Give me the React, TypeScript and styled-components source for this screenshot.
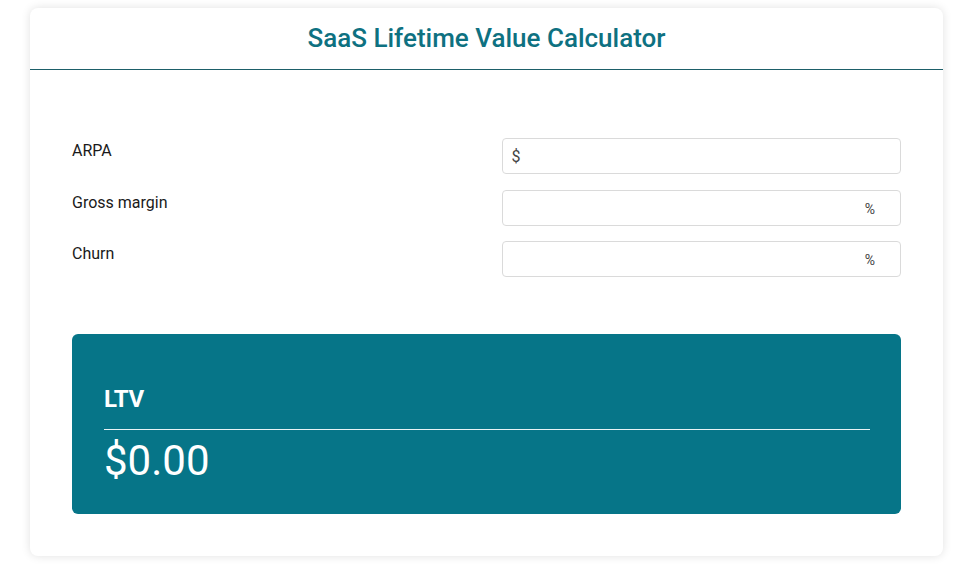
import React from "react";
import styled, { createGlobalStyle } from "styled-components";

const Global = createGlobalStyle`
  * { box-sizing: border-box; }
  body { margin: 0; background: #fff; font-family: Roboto, "Liberation Sans", sans-serif; }
`;

const Page = styled.div`
  padding: 8px 32px 14px 30px;
`;

const Card = styled.div`
  background: #fff;
  border-radius: 8px;
  box-shadow: 0 0 10px rgba(0, 0, 0, 0.12);
  overflow: hidden;
`;

const Header = styled.div`
  height: 62px;
  border-bottom: 1px solid #1d5f69;
  display: flex;
  align-items: center;
  justify-content: center;
  padding-bottom: 1px;
`;

const Title = styled.h1`
  margin: 0;
  font-size: 26px;
  font-weight: 500;
  color: #0e7181;
  letter-spacing: 0;
`;

const Body = styled.div`
  padding: 68px 42px 42px;
`;

const Form = styled.div`
  display: flex;
  flex-direction: column;
  gap: 15.5px;
`;

const Row = styled.div`
  display: grid;
  grid-template-columns: 1fr 1fr;
  column-gap: 30px;
`;

const Label = styled.label`
  font-size: 16px;
  color: #1a1a1a;
  padding-top: 3px;
`;

const InputBox = styled.div<{ $suffix?: boolean }>`
  height: 36px;
  border: 1px solid #dadada;
  border-radius: 4px;
  display: flex;
  align-items: center;
  justify-content: ${(p) => (p.$suffix ? "flex-end" : "flex-start")};
  padding: ${(p) => (p.$suffix ? "2px 25px 0 0" : "0 0 0 9px")};
`;

const Affix = styled.span<{ $small?: boolean }>`
  font-size: ${(p) => (p.$small ? "14px" : "16px")};
  color: #444;
`;

const Result = styled.div`
  margin-top: 57px;
  height: 180px;
  background: #067588;
  border-radius: 6px;
  padding: 51px 31px 0 32px;
  color: #fff;
`;

const ResultLabel = styled.div`
  font-size: 24px;
  font-weight: 700;
  letter-spacing: -0.5px;
  padding-bottom: 16px;
  border-bottom: 1px solid #e8f3f5;
`;

const ResultValue = styled.div`
  font-size: 42px;
  font-weight: 400;
  margin-top: 6px;
`;

export default function App() {
  return (
    <>
      <Global />
      <Page>
        <Card>
          <Header>
            <Title>SaaS Lifetime Value Calculator</Title>
          </Header>
          <Body>
            <Form>
              <Row>
                <Label>ARPA</Label>
                <InputBox>
                  <Affix>$</Affix>
                </InputBox>
              </Row>
              <Row>
                <Label>Gross margin</Label>
                <InputBox $suffix>
                  <Affix $small>%</Affix>
                </InputBox>
              </Row>
              <Row>
                <Label>Churn</Label>
                <InputBox $suffix>
                  <Affix $small>%</Affix>
                </InputBox>
              </Row>
            </Form>
            <Result>
              <ResultLabel>LTV</ResultLabel>
              <ResultValue>$0.00</ResultValue>
            </Result>
          </Body>
        </Card>
      </Page>
    </>
  );
}
